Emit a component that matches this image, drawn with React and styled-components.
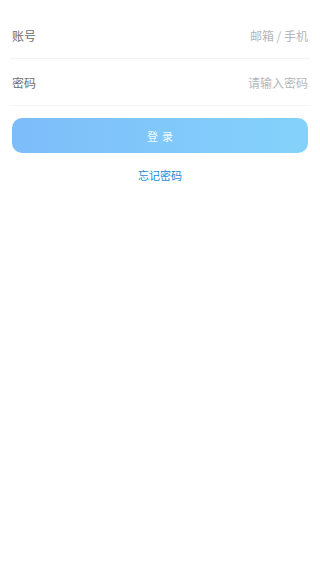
import React from 'react';
import styled, { createGlobalStyle } from 'styled-components';

const Global = createGlobalStyle`
  html, body {
    margin: 0;
    padding: 0;
    background: #fff;
    font-family: "Noto Sans CJK SC", "Noto Sans", sans-serif;
  }
`;

const Form = styled.div`
  padding: 12px 10px 0;
`;

const Field = styled.label`
  display: flex;
  align-items: center;
  height: 46px;
  padding: 0 2px;
  border-bottom: 1px solid #f3f4f6;
`;

const Label = styled.span`
  width: 80px;
  font-size: 12px;
  color: #6e6e72;
`;

const Input = styled.input`
  flex: 1;
  min-width: 0;
  border: none;
  outline: none;
  background: transparent;
  text-align: right;
  font-family: inherit;
  font-size: 12px;
  color: #333;
  padding: 0;
  &::placeholder {
    color: #b6b6ba;
  }
`;

const Submit = styled.button`
  display: block;
  width: calc(100% - 4px);
  margin: 12px 2px 0;
  height: 35px;
  border: none;
  border-radius: 10px;
  background: linear-gradient(90deg, #7dbdfa 0%, #84d2fb 100%);
  color: rgba(255, 255, 255, 0.92);
  font-family: inherit;
  font-size: 11px;
  letter-spacing: 4px;
  text-indent: 4px;
`;

const Forgot = styled.a`
  display: block;
  margin-top: 15px;
  text-align: center;
  font-size: 11px;
  line-height: 14px;
  color: #1a8ad6;
  text-decoration: none;
`;

const App = () => (
  <>
    <Global />
    <Form>
      <Field>
        <Label>账号</Label>
        <Input placeholder="邮箱 / 手机" />
      </Field>
      <Field>
        <Label>密码</Label>
        <Input type="password" placeholder="请输入密码" />
      </Field>
      <Submit>登录</Submit>
      <Forgot href="#">忘记密码</Forgot>
    </Form>
  </>
);

export default App;
